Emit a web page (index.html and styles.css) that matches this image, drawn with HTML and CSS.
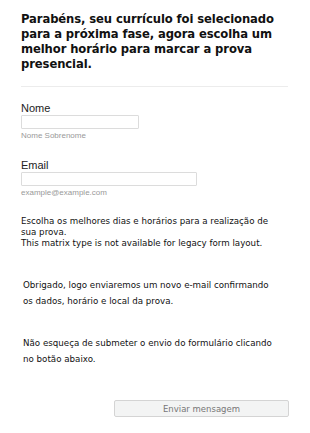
FILE: index.html
```html
<!DOCTYPE html>
<html lang="pt">
<head>
  <meta charset="UTF-8">
  <title>Agendamento da prova</title>
  <link rel="stylesheet" href="styles.css">
</head>
<body>

<div class="form">
  <h1>Parabéns, seu currículo foi selecionado para a próxima fase, agora escolha um melhor horário para marcar a prova presencial.</h1>
  <div class="line"></div>

  <div class="field">
    <label for="nome">Nome</label>
    <input type="text" id="nome" class="short">
    <div class="hint">Nome Sobrenome</div>
  </div>

  <div class="field">
    <label for="email">Email</label>
    <input type="text" id="email" class="long">
    <div class="hint">example@example.com</div>
  </div>

  <div class="matrix">
    Escolha os melhores dias e horários para a realização de sua prova.<br>
    This matrix type is not available for legacy form layout.
  </div>

  <p class="note">Obrigado, logo enviaremos um novo e-mail confirmando os dados, horário e local da prova.</p>

  <p class="note">Não esqueça de submeter o envio do formulário clicando no botão abaixo.</p>

  <div class="actions">
    <button>Enviar mensagem</button>
  </div>
</div>

</body>
</html>
```

FILE: styles.css
```css
body { margin: 0; background: #fff; font-family: "DejaVu Sans", Verdana, sans-serif; color: #000; }
.form { padding: 12px 21px 0 21px; }
h1 { font-size: 11.6px; font-weight: bold; line-height: 15px; margin: 0; color: #111; width: 262px; letter-spacing: -0.1px; }
.line { height: 1px; background: #ececec; margin: 14px 0 0 0; width: 267px; }
.field { margin-top: 15px; }
.field + .field { margin-top: 18px; }
label { display: block; font-family: "Liberation Sans", Arial, sans-serif; font-size: 11px; line-height: 13px; color: #222; }
input { display: block; box-sizing: border-box; height: 14px; border: 1px solid #dcdcdc; border-radius: 1px; padding: 0; margin: 0; background: #fff; }
input.short { width: 118px; }
input.long { width: 176px; }
.hint { font-family: "Liberation Sans", Arial, sans-serif; font-size: 8px; color: #999; margin-top: 2px; line-height: 10px; }
.matrix { margin-top: 18px; font-size: 8.7px; line-height: 11px; color: #111; width: 265px; }
.note { margin: 28px 0 0 2px; font-size: 8.7px; line-height: 16px; color: #111; width: 258px; }
.note + .note { margin-top: 26px; }
.actions { display: flex; justify-content: flex-end; margin-top: 33px; width: 268px; }
button { width: 175px; height: 17px; padding: 0; border: 1px solid #d4d4d4; border-radius: 2px; background: #f3f4f4; color: #777; font-family: "DejaVu Sans", Verdana, sans-serif; font-size: 8.5px; }
```
